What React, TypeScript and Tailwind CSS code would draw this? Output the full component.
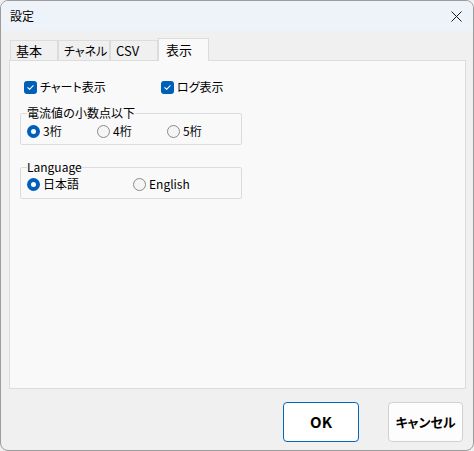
import React from 'react';

const font = "font-['Noto_Sans_CJK_JP','Noto_Sans',sans-serif]";

function Check({ label }: { label: string }) {
    return (
        <label className="flex items-center gap-[3px] h-[16px]">
            <span className="w-[13px] h-[13px] rounded-[3px] bg-[#005fb8] flex items-center justify-center">
                <svg width="9" height="9" viewBox="0 0 10 10" fill="none" stroke="white" strokeWidth={1.2}>
                    <path d="M2 5.2l2 2L8 3" strokeLinecap="round" strokeLinejoin="round" />
                </svg>
            </span>
            <span className="text-[12px] leading-[16px] text-black [font-feature-settings:'palt']">{label}</span>
        </label>
    );
}

function Radio({ label, on, width }: { label: string; on?: boolean; width: string }) {
    return (
        <label className={`flex items-center gap-[3px] h-[16px] ${width}`}>
            {on ? (
                <span className="w-[13px] h-[13px] rounded-full bg-[#005fb8] flex items-center justify-center">
                    <span className="w-[5px] h-[5px] rounded-full bg-white" />
                </span>
            ) : (
                <span className="w-[13px] h-[13px] rounded-full border border-[#8a8a8a] bg-[#f5f5f5]" />
            )}
            <span className="text-[12px] leading-[16px] text-black">{label}</span>
        </label>
    );
}

function Tab({ label, w, active, size = 'text-[13px]' }: { label: string; w: string; active?: boolean; size?: string }) {
    if (active) {
        return (
            <div className={`${w} h-[23px] -mb-px bg-[#f9f9f9] border border-b-0 border-[#dcdcdc] flex items-center pl-[7px] text-[13px] text-black relative z-10 whitespace-nowrap`}>
                {label}
            </div>
        );
    }
    return (
        <div className={`${w} h-[20px] bg-[#f0f0f0] border border-b-0 border-[#dcdcdc] flex items-center pl-[5px] ${size} text-black whitespace-nowrap overflow-hidden [font-feature-settings:'palt']`}>
            {label}
        </div>
    );
}

export default function App() {
    return (
        <div className={`w-[474px] h-[451px] ${font} bg-[#f0f0f0]`}>
            <div className="w-[474px] h-[451px] border border-[#9c9c9c] rounded-[8px] overflow-hidden flex flex-col bg-[#f0f0f0]">
                {/* Title bar */}
                <div className="h-[30px] bg-[#eef3f9] flex items-center justify-between pl-[9px] pr-[11px] shrink-0">
                    <span className="text-[12px] text-black">設定</span>
                    <svg width="11" height="11" viewBox="0 0 11 11" stroke="#1a1a1a" strokeWidth={1}>
                        <path d="M0.5 0.5l10 10M10.5 0.5l-10 10" />
                    </svg>
                </div>

                {/* Tabs */}
                <div className="pl-[9px] pt-[7px] flex items-end">
                    <Tab label="基本" w="w-[48px]" />
                    <Tab label="チャネル" w="w-[52px]" size="text-[12px]" />
                    <Tab label="CSV" w="w-[48px]" />
                    <Tab label="表示" w="w-[51px]" active />
                </div>

                {/* Panel */}
                <div className="ml-[8px] w-[457px] h-[329px] bg-[#f9f9f9] border border-[#dcdcdc] pl-[10px] pt-[18px]">
                    <div className="flex pl-[4px]">
                        <div className="w-[137px]">
                            <Check label="チャート表示" />
                        </div>
                        <Check label="ログ表示" />
                    </div>

                    <fieldset className="mt-[10px] w-[222px] h-[40px] border border-[#dcdcdc] rounded-[2px] px-[6px] pb-[4px]">
                        <legend className="px-0 text-[12px] leading-[16px] text-black">電流値の小数点以下</legend>
                        <div className="flex pt-[2px]">
                            <Radio label="3桁" on width="w-[70px]" />
                            <Radio label="4桁" width="w-[70px]" />
                            <Radio label="5桁" width="w-[60px]" />
                        </div>
                    </fieldset>

                    <fieldset className="mt-[14px] w-[222px] h-[40px] border border-[#dcdcdc] rounded-[2px] px-[6px] pb-[4px]">
                        <legend className="px-0 text-[12px] leading-[16px] text-black">Language</legend>
                        <div className="flex pt-[1px]">
                            <Radio label="日本語" on width="w-[106px]" />
                            <Radio label="English" width="w-[80px]" />
                        </div>
                    </fieldset>
                </div>

                {/* Buttons */}
                <div className="flex justify-end gap-[29px] pr-[10px] pt-[13px]">
                    <button className="w-[76px] h-[40px] bg-white border border-[#0067c0] rounded-[4px] text-[15px] font-bold text-black">
                        OK
                    </button>
                    <button className="w-[75px] h-[40px] bg-[#fdfdfd] border border-[#d0d0d0] rounded-[4px] text-[13px] font-bold text-black [font-feature-settings:'palt']">
                        キャンセル
                    </button>
                </div>
            </div>
        </div>
    );
}
